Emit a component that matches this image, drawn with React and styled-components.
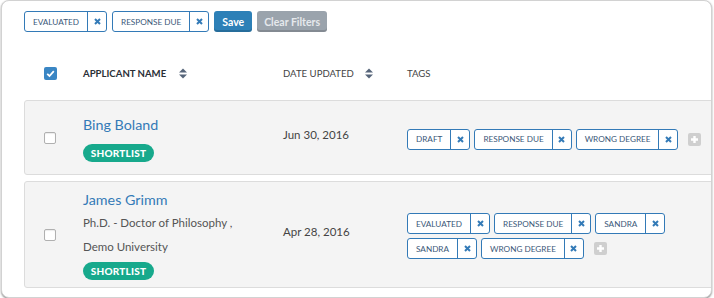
import React from 'react';
import styled, { createGlobalStyle } from 'styled-components';

const Global = createGlobalStyle`
  html, body { margin: 0; padding: 0; background: #fff; }
  body { font-family: Lato, "Open Sans", sans-serif; }
`;

const Card = styled.div`
  box-sizing: border-box;
  margin-left: 1px;
  width: 711px;
  border: 1px solid #d2d2d2;
  border-radius: 8px;
  box-shadow: 0 1px 2px rgba(0, 0, 0, 0.45);
  padding: 10px 0 3px 22px;
  overflow: hidden;
  background: #fff;
`;

const FilterBar = styled.div`
  display: flex;
  align-items: center;
  gap: 5px;
`;

const Chip = styled.span`
  display: inline-flex;
  height: 21px;
  box-sizing: border-box;
  border: 1px solid #337ab7;
  border-radius: 3px;
  background: #fff;
`;

const ChipLabel = styled.span`
  display: flex;
  align-items: center;
  padding: 0 8px 0 8px;
  font-size: 8.2px;
  color: #3b5878;
  text-transform: uppercase;
  border-right: 1px solid #337ab7;
  white-space: nowrap;
`;

const ChipRemove = styled.span`
  width: 18px;
  display: flex;
  align-items: center;
  justify-content: center;
`;

const Button = styled.button`
  height: 21px;
  border: 0;
  border-radius: 3px;
  padding: 0 ${(p) => p.$pad}px;
  font-family: Lato, sans-serif;
  font-weight: 700;
  font-size: 10.5px;
  background: ${(p) => (p.$primary ? '#2d80b7' : '#9aa3ac')};
  color: ${(p) => (p.$primary ? '#fff' : '#e6e9ec')};
  box-shadow: inset 0 -2px 0 rgba(0, 0, 0, 0.15);
  cursor: pointer;
`;

const Grid = styled.div`
  display: grid;
  grid-template-columns: 58px 200px 124px 1fr;
  align-items: center;
`;

const HeaderRow = styled(Grid)`
  box-sizing: border-box;
  height: 68px;
  padding: 15px 0 0 1px;
`;

const HeaderCell = styled.div`
  display: flex;
  align-items: center;
  gap: ${(p) => (p.$active ? 13 : 11)}px;
  font-size: 9.6px;
  text-transform: uppercase;
  color: ${(p) => (p.$active ? '#2a2f36' : '#444')};
  font-weight: ${(p) => (p.$active ? 700 : 400)};
`;

const CheckCell = styled.div`
  display: flex;
  align-items: center;
  padding-left: 19px;
`;

const Row = styled(Grid)`
  box-sizing: border-box;
  min-height: 75px;
  padding: 8px 0 7px;
  background: #f4f4f4;
  border: 1px solid #dcdcdc;
  border-radius: 3px;
  margin: 0 -6px 6px 0;
`;

const Box = styled.span`
  display: block;
  width: 12px;
  height: 12px;
  box-sizing: border-box;
  background: #fff;
  border: 1px solid #b0b0b0;
  border-radius: 2px;
  box-shadow: inset 0 1px 1px rgba(0, 0, 0, 0.08);
`;

const NameCell = styled.div`
  display: flex;
  flex-direction: column;
  align-items: flex-start;
`;

const Name = styled.a`
  font-size: 14.3px;
  line-height: 20px;
  color: #337ab7;
  text-decoration: none;
`;

const Details = styled.div`
  font-size: 11.5px;
  line-height: 24px;
  color: #555;
  margin: 1px 0 -6px;
`;

const Badge = styled.span`
  display: inline-flex;
  align-items: center;
  justify-content: center;
  height: 18px;
  width: 71px;
  margin-top: 9px;
  border-radius: 9px;
  background: #17a98c;
  color: #fff;
  font-size: 10px;
  font-weight: 900;
  letter-spacing: 0.2px;
`;

const DateCell = styled.div`
  font-size: 11.5px;
  color: #444;
  margin-bottom: 8px;
`;

const Tags = styled.div`
  display: flex;
  flex-wrap: wrap;
  align-items: center;
  gap: 4px 4px;
  margin-top: 2px;
  padding-right: 4px;
`;

const AddButton = styled.span`
  display: flex;
  align-items: center;
  justify-content: center;
  width: 13px;
  height: 13px;
  margin-left: 6px;
  border-radius: 2px;
  background: #cfcfcf;
`;

const X = () => (
  <svg width="7" height="7" viewBox="0 0 7 7">
    <path d="M1 1 L6 6 M6 1 L1 6" stroke="#337ab7" strokeWidth="2" strokeLinecap="butt" />
  </svg>
);

const SortIcon = () => (
  <svg width="8" height="11" viewBox="0 0 8 11">
    <path d="M0 4.5 L4 0.5 L8 4.5 Z M0 6.5 L8 6.5 L4 10.5 Z" fill="#56657a" />
  </svg>
);

const CheckedBox = () => (
  <svg width="13" height="13" viewBox="0 0 13 13">
    <rect x="0" y="0" width="13" height="13" rx="2" fill="#3a86c4" />
    <path d="M3.2 6.8 L5.5 9 L9.8 4.2" stroke="#fff" strokeWidth="1.8" fill="none" />
  </svg>
);

const Plus = () => (
  <svg width="9" height="9" viewBox="0 0 9 9">
    <path d="M4.5 1 V8 M1 4.5 H8" stroke="#fff" strokeWidth="2.4" />
  </svg>
);

const Tag = ({ label }) => (
  <Chip>
    <ChipLabel>{label}</ChipLabel>
    <ChipRemove>
      <X />
    </ChipRemove>
  </Chip>
);

const applicants = [
  {
    name: 'Bing Boland',
    details: null,
    date: 'Jun 30, 2016',
    tags: ['Draft', 'Response Due', 'Wrong Degree'],
  },
  {
    name: 'James Grimm',
    details: ['Ph.D. - Doctor of Philosophy ,', 'Demo University'],
    date: 'Apr 28, 2016',
    tags: ['Evaluated', 'Response Due', 'Sandra', 'Sandra', 'Wrong Degree'],
  },
];

export default function App() {
  return (
    <>
      <Global />
      <Card>
        <FilterBar>
          <Tag label="Evaluated" />
          <Tag label="Response Due" />
          <Button $primary $pad={8}>Save</Button>
          <Button $pad={7}>Clear Filters</Button>
        </FilterBar>
        <HeaderRow>
          <CheckCell>
            <CheckedBox />
          </CheckCell>
          <HeaderCell $active>
            Applicant Name <SortIcon />
          </HeaderCell>
          <HeaderCell>
            Date Updated <SortIcon />
          </HeaderCell>
          <HeaderCell>Tags</HeaderCell>
        </HeaderRow>
        {applicants.map((a, i) => (
          <Row key={i}>
            <CheckCell>
              <Box />
            </CheckCell>
            <NameCell>
              <Name href="#">{a.name}</Name>
              {a.details && (
                <Details>
                  {a.details.map((d, j) => (
                    <div key={j}>{d}</div>
                  ))}
                </Details>
              )}
              <Badge>SHORTLIST</Badge>
            </NameCell>
            <DateCell>{a.date}</DateCell>
            <Tags>
              {a.tags.map((t, j) => (
                <Tag key={j} label={t} />
              ))}
              <AddButton>
                <Plus />
              </AddButton>
            </Tags>
          </Row>
        ))}
      </Card>
    </>
  );
}
